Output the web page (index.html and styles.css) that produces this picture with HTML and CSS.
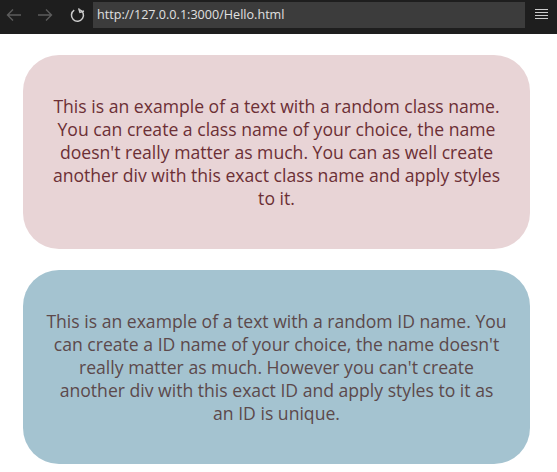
FILE: index.html
```html
<!DOCTYPE html>
<html>
<head>
<meta charset="utf-8">
<title>Hello</title>
<link rel="stylesheet" href="styles.css">
</head>
<body>
<div class="toolbar">
  <div class="nav">
    <svg class="icon back" width="20" height="20" viewBox="0 0 20 20"><path d="M17 10H4M9 4.5L3.5 10L9 15.5" fill="none" stroke="#5c5c5c" stroke-width="1.4"/></svg>
    <svg class="icon fwd" width="20" height="20" viewBox="0 0 20 20"><path d="M3 10H16M11 4.5L16.5 10L11 15.5" fill="none" stroke="#5c5c5c" stroke-width="1.4"/></svg>
    <svg class="icon reload" width="20" height="20" viewBox="0 0 20 20"><path d="M7.2 5.2A6 6 0 1 0 12.5 4.6" fill="none" stroke="#cccccc" stroke-width="1.5"/><path d="M12.2 3.2V7.4H16.4" fill="none" stroke="#cccccc" stroke-width="1.5" transform="rotate(-18 12.5 5)"/></svg>
  </div>
  <div class="url">http://127.0.0.1:3000/Hello.html</div>
  <div class="menu"><span></span><span></span><span></span><span></span></div>
</div>
<main class="page">
  <div class="card card-class">
    <p>This is an example of a text with a random class name.<br>You can create a class name of your choice, the name<br>doesn't really matter as much. You can as well create<br>another div with this exact class name and apply styles<br>to it.</p>
  </div>
  <div class="card card-id">
    <p>This is an example of a text with a random ID name. You<br>can create a ID name of your choice, the name doesn't<br>really matter as much. However you can't create<br>another div with this exact ID and apply styles to it as<br>an ID is unique.</p>
  </div>
</main>
</body>
</html>
```
FILE: styles.css
```css
html, body {
  margin: 0;
  padding: 0;
  background: #ffffff;
}
.toolbar {
  height: 34px;
  background: #1e1e1e;
  display: flex;
  align-items: flex-start;
}
.nav {
  display: flex;
  align-items: center;
  height: 30px;
  padding-left: 4px;
  width: 89px;
}
.icon { display: block; }
.back { margin-right: 11px; }
.fwd { margin-right: 12px; }
.url {
  margin-top: 2px;
  width: 428px;
  height: 26px;
  background: #3c3c3c;
  color: #e0e0e0;
  font-family: "Open Sans", "DejaVu Sans", sans-serif;
  font-size: 12.6px;
  line-height: 26px;
  padding-left: 4px;
}
.menu {
  margin-left: 10px;
  margin-top: 9px;
  display: flex;
  flex-direction: column;
  gap: 2px;
  width: 13px;
}
.menu span {
  display: block;
  height: 1px;
  background: #cccccc;
}
.page {
  padding: 21px 27px 0 23px;
}
.card {
  border-radius: 36px;
  padding: 40px 10px 39px;
  margin-bottom: 21px;
  text-align: center;
}
.card p {
  margin: 0;
  font-family: "Comic Sans MS", "Open Sans", sans-serif;
  font-size: 17.6px;
  line-height: 23px;
}
.card-class {
  background: #e8d4d6;
  color: #6c2f35;
}
.card-id {
  background: #a4c3d0;
  color: #5c494b;
}
```
